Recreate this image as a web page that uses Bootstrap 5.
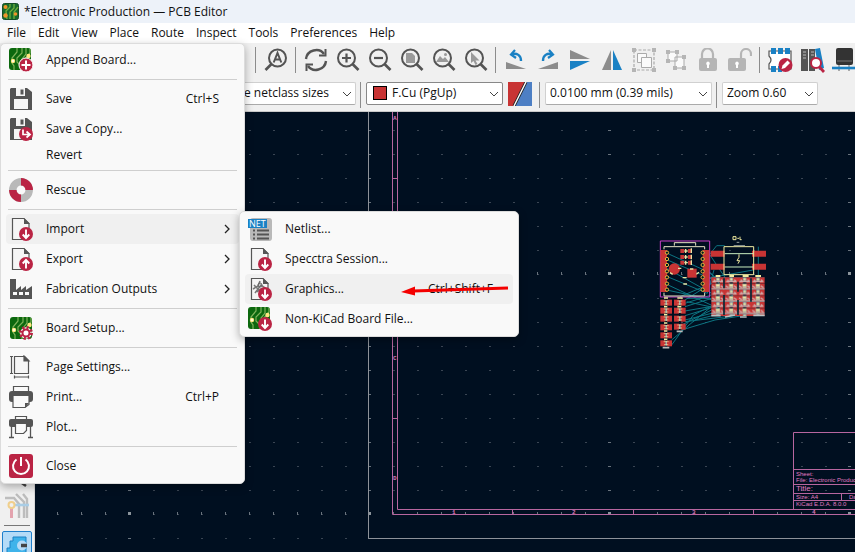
<!DOCTYPE html>
<html lang="en">
<head>
<meta charset="utf-8">
<meta name="viewport" content="width=device-width, initial-scale=1">
<title>*Electronic Production — PCB Editor</title>
<link rel="stylesheet" href="https://cdn.jsdelivr.net/npm/bootstrap@5.3.0/dist/css/bootstrap.min.css">
<style>
body{font-family:"Open Sans","Noto Sans",sans-serif;font-size:12px;line-height:20px;color:#111;background:#f0f0f0}
.titlebar{height:23px;background:#edf2f9;padding:0 2px}
.titlebar h1{font-size:12px;line-height:23px;font-weight:400;margin-left:5px}
.menubar{height:20px;background:#fff}
.menubar .btn{font-size:12px;line-height:20px;padding:0 5px 0 7px;border:0;border-radius:0;color:#111}
.menubar .active{background:#f9f9f9}
.tools{height:37px;padding:0 0 4px 252px}
.tools .btn,.side .btn{width:32px;height:32px;padding:0;border:0;border-radius:2px;display:flex;align-items:center;justify-content:center;flex:none}
.vsep{width:8px;height:26px;flex:none;background:linear-gradient(#8c8c8c,#8c8c8c) 3px 0/1px 100% no-repeat}
.options{height:32px;padding:2px 0 0 120px;border-bottom:1px solid #c9c9c9}
.options .form-select{height:23px;font-size:12px;line-height:20px;padding:0 20px 1px 4px;border:1px solid #d0d0d0;border-bottom-color:#aaa;border-radius:2px;color:#111;flex:none;background-color:#fff;background-image:url("data:image/svg+xml,%3Csvg xmlns='http://www.w3.org/2000/svg' viewBox='0 0 10 10'%3E%3Cpath d='M1 3l4 4 4-4' fill='none' stroke='%23444'/%3E%3C/svg%3E");background-size:10px 10px;background-position:right 3px center}
.sel-track{width:236px;text-align:right;text-align-last:right}
.options .sel-track{padding-right:26px}
.sel-layer{width:137px}
.options .sel-layer .form-select{padding-left:25px;border-color:#888;width:100%}
.chip{left:7px;top:4px;width:14px;height:14px;background:#c83434;border:1px solid #000;pointer-events:none}
.sel-grid{width:167px}.sel-zoom{width:96px}
.gap-sep{padding:0 1px}
.swatch{margin:0 2px 0 4px}
.side{width:35px;background:#f0f0f0;padding-top:368px;border-right:1px solid #d8d8d8;flex:none}
.side .btn.cut{height:10px;align-items:flex-start}
.side hr{width:26px;margin:3px 0 5px;border-color:#777;opacity:1}
.side .chosen{border:1px solid #1f7fcb;background:#b5dbf7;width:30px;height:30px}
.board{background:#000f20;min-width:0}
.pop{background:#f9f9f9;border:1px solid #dcdcdc;border-radius:5px;padding:1px 5px 2px;box-shadow:0 3px 8px rgba(0,0,0,.3)}
.pop-file{left:0;top:43px;width:245px}
.pop-import{left:239px;top:211px;width:280px;padding-top:2px}
.pop .btn{width:100%;height:30px;padding:0 20px 0 3px;border:0;border-radius:4px;display:flex;align-items:center;text-align:left;font-size:12px;line-height:20px;color:#111}
.pop .btn.plain{height:22px;padding-left:40px}
.pop .btn.parent{padding-right:9px}
.pop .btn.hot{background:#f0f0f0}
.pop .btn svg.ic{margin-right:13px;flex:none}
.pop hr{margin:0 2px;height:9px;border:0;opacity:1;background:linear-gradient(#cfcfcf,#cfcfcf) 0 4px/100% 1px no-repeat}
.callout{left:400px;top:280px}
</style>
<script src="https://cdn.jsdelivr.net/npm/bootstrap@5.3.0/dist/js/bootstrap.bundle.min.js"></script>
</head>
<body class="vh-100 overflow-hidden position-relative d-flex flex-column">
<svg width="0" height="0" class="position-absolute" aria-hidden="true">
<defs>
<symbol id="pcb" viewBox="0 0 24 24"><rect x="0" y="0" width="22" height="22" rx="3" fill="#0c680e"/><path d="M8 0v4L3 10v5l2 3v4M13 0v5L8 10v4l4 4v4M17 0v6l-4 5 2 4M21 1v4l-5 6" fill="none" stroke="#7fb35a" stroke-width="1.200"/><circle cx="4" cy="13" r="2.200" fill="#ffe680"/><circle cx="4" cy="13" r="1" fill="#fff"/><circle cx="19.500" cy="8" r="2.200" fill="#ffe680"/></symbol>
<symbol id="page" viewBox="0 0 24 24"><path d="M3.500 1.500h11.500l5 5v16h-16.500z" fill="#f5f5f5" stroke="#555" stroke-width="1.200"/><path d="M15 1l6 6h-6z" fill="#555"/></symbol>
<symbol id="down" viewBox="0 0 24 24"><circle cx="17" cy="17" r="7" fill="#ba2444"/><path d="M17 12.500v8M13.700 17.500l3.300 3.500 3.300-3.500" fill="none" stroke="#fff" stroke-width="1.900"/></symbol>
<symbol id="up" viewBox="0 0 24 24"><circle cx="17" cy="17" r="7" fill="#ba2444"/><path d="M17 21.500v-8M13.700 16.500l3.300-3.500 3.300 3.500" fill="none" stroke="#fff" stroke-width="1.900"/></symbol>
<symbol id="disk" viewBox="0 0 24 24"><path d="M2 1h16l5 4v18H1V2z" fill="#545454"/><path d="M7 1h9v8H7z" fill="#f5f5f5"/><path d="M11.500 2.500h3v5h-3z" fill="#545454"/><path d="M5 12h14v10H5z" fill="#f5f5f5"/></symbol>
<symbol id="lens" viewBox="0 0 24 24"><circle cx="10.500" cy="10" r="8.500" fill="none" stroke="#545454" stroke-width="2"/><path d="M16.500 16l6 6" stroke="#545454" stroke-width="2.600"/></symbol>
<symbol id="chev" viewBox="0 0 6 10"><path d="M1 1l4 4-4 4" fill="none" stroke="#222" stroke-width="1.300"/></symbol>
</defs>
</svg>

<header class="flex-shrink-0">
<div class="titlebar d-flex align-items-center">
<svg width="17" height="17" viewBox="0 0 17 17" aria-hidden="true"><rect x=".5" y=".5" width="16" height="16" rx="2" fill="#176b2c" stroke="#164d27"/><path d="M8 1v3L4 8l1 8M12 1v4L8 9v7M16 4l-4 5v7" fill="none" stroke="#70ae3d" stroke-width="1.300"/><circle cx="3.500" cy="4" r="2" fill="#f0932b"/><circle cx="3.500" cy="12.500" r="2.200" fill="#f0932b"/><circle cx="13.500" cy="11" r="1.800" fill="#f0932b"/></svg>
<h1 class="mb-0">*Electronic Production — PCB Editor</h1>
</div>
<nav class="menubar d-flex" aria-label="Main menu">
<button class="btn active" type="button">File</button><button class="btn" type="button">Edit</button><button class="btn" type="button">View</button><button class="btn" type="button">Place</button><button class="btn" type="button">Route</button><button class="btn" type="button">Inspect</button><button class="btn" type="button">Tools</button><button class="btn" type="button">Preferences</button><button class="btn" type="button">Help</button>
</nav>
<div class="tools d-flex align-items-center overflow-hidden" role="toolbar" aria-label="Main tools">
<span class="vsep"></span>
<button class="btn" type="button" aria-label="Find"><svg width="24" height="24" viewBox="0 0 24 24"><circle cx="13.500" cy="10" r="8.500" fill="none" stroke="#545454" stroke-width="2"/><path d="M7.500 16l-6 6" stroke="#545454" stroke-width="2.600"/><path d="M9.700 14.500l3.800-9.500 3.800 9.500M11 11.500h5" fill="none" stroke="#545454" stroke-width="2"/></svg></button>
<span class="vsep"></span>
<button class="btn" type="button" aria-label="Refresh"><svg width="24" height="24" viewBox="0 0 24 24" fill="none" stroke="#545454" stroke-width="2.400"><path d="M2 11C3 2 15-1 20 6M22 13c-1 9-13 12-18 5"/><path d="M21.500 1v6.500H15M2.500 23v-6.500H9" stroke-width="2"/></svg></button>
<button class="btn" type="button" aria-label="Zoom in"><svg width="24" height="24" viewBox="0 0 24 24"><use href="#lens"/><path d="M6 10h9M10.500 5.500v9" stroke="#545454" stroke-width="2.200"/></svg></button>
<button class="btn" type="button" aria-label="Zoom out"><svg width="24" height="24" viewBox="0 0 24 24"><use href="#lens"/><path d="M6 10h9" stroke="#545454" stroke-width="2.200"/></svg></button>
<button class="btn" type="button" aria-label="Zoom to page"><svg width="24" height="24" viewBox="0 0 24 24"><use href="#lens"/><path d="M6 5h6l3 3v7H6z" fill="#9a9a9a"/></svg></button>
<button class="btn" type="button" aria-label="Zoom to objects"><svg width="24" height="24" viewBox="0 0 24 24"><use href="#lens"/><path d="M4 14l4-6 3 3 2-2 4 5z" fill="#9a9a9a"/><circle cx="13.500" cy="6.500" r="1.500" fill="#9a9a9a"/></svg></button>
<button class="btn" type="button" aria-label="Zoom to selection"><svg width="24" height="24" viewBox="0 0 24 24"><use href="#lens"/><path d="M7 4v11l2.500-2 2 4 2-1-2-3.500h4z" fill="#9a9a9a"/></svg></button>
<span class="vsep"></span>
<button class="btn" type="button" aria-label="Rotate left"><svg width="24" height="24" viewBox="0 0 24 24"><path d="M2 14v7h20z" fill="#8c8c8c"/><path d="M8 6c5-1 9 1 9 7" fill="none" stroke="#1a81c4" stroke-width="2.400"/><path d="M11 2L7 6.500l5 3.500" fill="none" stroke="#1a81c4" stroke-width="2.200"/></svg></button>
<button class="btn" type="button" aria-label="Rotate right"><svg width="24" height="24" viewBox="0 0 24 24"><path d="M22 14v7H2z" fill="#8c8c8c"/><path d="M16 6c-5-1-9 1-9 7" fill="none" stroke="#1a81c4" stroke-width="2.400"/><path d="M13 2l4 4.500-5 3.500" fill="none" stroke="#1a81c4" stroke-width="2.200"/></svg></button>
<button class="btn" type="button" aria-label="Flip vertical"><svg width="24" height="24" viewBox="0 0 24 24"><path d="M2 2l20 9H2z" fill="#8c8c8c"/><path d="M2 13h20L2 22z" fill="#1a81c4"/></svg></button>
<button class="btn" type="button" aria-label="Flip horizontal"><svg width="24" height="24" viewBox="0 0 24 24"><path d="M11 2v20H2z" fill="#8c8c8c"/><path d="M13 2l9 20h-9z" fill="#1a81c4"/></svg></button>
<button class="btn" type="button" aria-label="Group"><svg width="24" height="24" viewBox="0 0 24 24"><path d="M2 2h20v20H2z" fill="none" stroke="#aaa" stroke-width="1.200" stroke-dasharray="3 1.500"/><path d="M0 0h4v4H0zM20 0h4v4h-4zM0 20h4v4H0zM20 20h4v4h-4z" fill="#b5b5b5"/><path d="M5.500 5.500h9v9h-9z" fill="#fafafa" stroke="#aaa"/><path d="M9.500 9.500h10v10h-10z" fill="#fafafa" stroke="#aaa"/></svg></button>
<button class="btn" type="button" aria-label="Ungroup"><svg width="24" height="24" viewBox="0 0 24 24"><path d="M4 4h9v9H4zM11 9h9v11h-9z" fill="#fafafa" stroke="#aaa"/><path d="M2 2h4v4H2zM11 2h4v4h-4zM2 11h4v4H2zM9 18h4v4H9zM18 18h4v4h-4zM18 7h4v4h-4z" fill="#b5b5b5"/></svg></button>
<button class="btn" type="button" aria-label="Lock"><svg width="24" height="24" viewBox="0 0 24 24"><path d="M6 11V6a5.500 5.500 0 0 1 11 0v5" fill="none" stroke="#b5b5b5" stroke-width="2.200"/><rect x="3" y="10" width="18" height="13" rx="2" fill="#b5b5b5"/><path d="M12 13.500a2 2 0 0 1 1 3.600V20h-2v-2.900a2 2 0 0 1 1-3.600z" fill="#fff"/></svg></button>
<button class="btn" type="button" aria-label="Unlock"><svg width="24" height="24" viewBox="0 0 24 24"><path d="M13 11V6a5 5 0 0 1 10 0v2" fill="none" stroke="#b5b5b5" stroke-width="2.200"/><rect x="0" y="10" width="18" height="13" rx="2" fill="#b5b5b5"/><path d="M9 13.500a2 2 0 0 1 1 3.600V20H8v-2.900a2 2 0 0 1 1-3.600z" fill="#fff"/></svg></button>
<span class="vsep"></span>
<button class="btn" type="button" aria-label="Footprint editor"><svg width="26" height="26" viewBox="0 0 26 26"><path d="M2 4h22v18H2v-5q4-4 0-8z" fill="#fff" stroke="#555" stroke-width="1.200"/><path d="M4 1h5v6H4zM11 1h5v6h-5zM18 1h5v6h-5zM4 19h5v6H4zM11 19h4v6h-4z" fill="#1a81c4"/><circle cx="18.500" cy="18" r="7" fill="#ba2444"/><path d="M14.500 22l1-3.500 5-5 2.500 2.500-5 5z" fill="#fff"/></svg></button>
<button class="btn" type="button" aria-label="Footprint libraries"><svg width="26" height="26" viewBox="0 0 26 26"><path d="M2 2h7v22H2zM10 2h6v22h-6z" fill="#545454"/><path d="M4 5h3M4 8h3M4 11h3M12 5h3M12 8h3" stroke="#bbb"/><path d="M16 2l5-1 4 20-5 2z" fill="#1a81c4"/><circle cx="17" cy="16" r="5" fill="#fff" stroke="#ba2444" stroke-width="2"/><path d="M20.500 20l4.500 5" stroke="#ba2444" stroke-width="2.800"/></svg></button>
<button class="btn" type="button" aria-label="Update board"><svg width="26" height="26" viewBox="0 0 26 26"><rect x="5" y="1" width="17" height="17" rx="2" fill="#333"/><path d="M6 14h15" stroke="#777"/><path d="M8 18v6M18 18v6" stroke="#aaa" stroke-width="2"/><path d="M1 21h25" stroke="#1a81c4" stroke-width="2.600"/></svg></button>
</div>
<div class="options d-flex overflow-hidden">
<select class="form-select sel-track" aria-label="Track width"><option>Track: use netclass sizes</option></select>
<span class="gap-sep d-flex"><span class="vsep"></span></span>
<div class="sel-layer position-relative flex-shrink-0"><select class="form-select" aria-label="Layer"><option>F.Cu (PgUp)</option></select><span class="chip position-absolute"></span></div>
<svg class="swatch flex-shrink-0" width="26" height="24" viewBox="0 0 26 24" aria-hidden="true"><path d="M1 0h18L7 24H1z" fill="#c83434"/><path d="M19 0h6v24H8z" fill="#4d7fc4"/><path d="M19 0L7 24" stroke="#222" stroke-width="3"/><path d="M19 0L7 24" stroke="#fff" stroke-width="1.400"/></svg>
<span class="gap-sep d-flex"><span class="vsep"></span></span>
<select class="form-select sel-grid" aria-label="Grid"><option>0.0100 mm (0.39 mils)</option></select>
<span class="gap-sep d-flex"><span class="vsep"></span></span>
<select class="form-select sel-zoom" aria-label="Zoom"><option>Zoom 0.60</option></select>
</div>
</header>

<main class="flex-grow-1 d-flex overflow-hidden">
<div class="side d-flex flex-column align-items-center" role="toolbar" aria-label="Display options">
<button class="btn cut" type="button" aria-label="Curved ratsnest"><svg width="24" height="8" viewBox="0 0 24 8"><path d="M14 1l7 5" stroke="#444" stroke-width="2.600"/></svg></button>
<button class="btn" type="button" aria-label="Ratsnest"><svg width="24" height="26" viewBox="0 0 24 26" fill="none"><path d="M0 5h9l5 6v14M11 1l8 8v16M18 1l4 5v19" stroke="#bdbdbd" stroke-width="2.400"/><path d="M9 12h15" stroke="#a9cde6" stroke-width="2.600"/><path d="M6.500 14v11" stroke="#e3a3ae" stroke-width="3"/><circle cx="6.500" cy="12" r="3" stroke="#f0cf8c" stroke-width="2"/></svg></button>
<hr>
<button class="btn chosen" type="button" aria-label="Filled zones"><svg width="22" height="22" viewBox="0 0 22 22"><path d="M7 2h13v18H1v-7h3V6h3z" fill="#3fb3ea" stroke="#1a81c4"/><circle cx="16" cy="10.500" r="5" fill="#b5dbf7"/><path d="M21 10.500h-6" stroke="#444" stroke-width="3.500"/></svg></button>
</div>
<div class="board flex-grow-1 overflow-hidden">
<svg width="100%" height="100%" class="d-block" role="img" aria-label="Board canvas">
<defs>
<pattern id="minor" width="24" height="24" patternUnits="userSpaceOnUse"><rect x="9" y="10" width="2" height="1" fill="#3a4553"/></pattern>
<pattern id="major" width="240" height="240" patternUnits="userSpaceOnUse"><path d="M128 10.500h3M128 58.500h3M128 82.500h3M128 106.500h3M128 130.500h3M128 154.500h3M128 178.500h3M128 202.500h3M128 226.500h3" stroke="#69737d"/><path d="M9.500 32v3M33.500 32v3M57.500 32v3M81.500 32v3M105.500 32v3M153.500 32v3M177.500 32v3M201.500 32v3M225.500 32v3" stroke="#69737d"/><path d="M128 32h3v3h-3z" fill="#8b949b"/></pattern>
<pattern id="pads" width="40" height="37" patternUnits="userSpaceOnUse" x="184" y="157"><rect width="15" height="17" fill="#c83434"/><rect x="25" width="15" height="17" fill="#c83434"/><rect x="15" width="10" height="14" fill="#9fa6a6"/><rect x="16" y="4" width="8" height="4" fill="#f2eda1"/><rect y="18" width="15" height="16" fill="#c83434"/><rect x="25" y="18" width="15" height="16" fill="#c83434"/><path d="M4 13h32M0 34h40M8 7l5 6M29 7l6 6M3 25l8 5M28 25l8 5" stroke="#d0aaa9" stroke-width="4"/><rect x="13" y="19" width="13" height="14" fill="#bdb8a1"/><path d="M15 24h9" stroke="#f2eda1" stroke-width="4"/></pattern>
<g id="part"><rect width="15" height="18" fill="#c83434"/><rect x="20" width="15" height="18" fill="#c83434"/><rect x="15" y="2" width="5" height="14" fill="#aaa"/><path d="M10 4h15M11 13h13" stroke="#f2eda1" stroke-width="2"/></g>
</defs>
<g transform="translate(-35 -112)">
<rect width="4000" height="4000" fill="url(#minor)"/><rect width="4000" height="4000" fill="url(#major)"/>
<path d="M368.500 112v426.500H4000" fill="none" stroke="#8d9299"/>
<g fill="none" stroke="#b7669f"><path d="M392.500 112v402.500H4000M397.500 112v397.500H4000M392 178.500h5M392 298.500h5M392 418.500h5M512.500 510v4M633.500 510v4M753.500 510v4"/><path d="M4000 432.500H793.500V509M794 469.500h3206M794 484.500h3206M794 493.500h3206M794 500.500h3206M841.500 494v6"/></g>
<g fill="#d878b8" font-family="Liberation Mono, monospace" font-weight="700" font-size="6"><text x="393" y="120">A</text><text x="393" y="240">B</text><text x="393" y="360">C</text><text x="393" y="480">D</text><text x="452" y="514">1</text><text x="572" y="514">2</text><text x="692" y="514">3</text><text x="812" y="514">4</text></g>
<g fill="#e07cc0" font-family="Liberation Sans, sans-serif" font-size="6"><text x="796" y="476">Sheet:</text><text x="796" y="482">File: Electronic Production</text><text x="796" y="491" font-size="8">Title:</text><text x="796" y="499">Size: A4</text><text x="849" y="499">Date:</text><text x="796" y="506">KiCad E.D.A. 8.0.0</text></g>
<g transform="translate(650 225) scale(.3333)">
<g fill="none" stroke="#0d7583" stroke-width="3"><path d="M52 85l132 60 80 105M50 104l140 60M50 130l135 75M52 155l120 50 20-70M50 178l150 70M160 112l40-50h24M160 130l80 60M170 160l140-25M65 360l65-90 120-60M105 225l95-60M105 235l110-35M105 245l145-45M105 258l145-25M105 272l165-50M105 285l100-25M105 290l165-20M95 315l100-30 130-20M95 300l120-60M65 345l70-60 120-30M110 220h150M110 230l140 30M325 65v90M50 195l140 30M180 90l60 90M90 215l95-40M130 290l60-50"/></g>
<path d="M31 48h148v168H31z" fill="none" stroke="#c83fc8" stroke-width="3"/>
<path d="M31 75h20v126H31zM158 75h20v126h-20z" fill="#c83434"/>
<path d="M42 73V65h122v8M42 203v10h122v-10M73 62V53h64v9" fill="none" stroke="#e9e4c4" stroke-width="3"/>
<g fill="#001a24" stroke="#e7b53b" stroke-width="3"><circle cx="51" cy="83" r="5"/><circle cx="51" cy="102" r="5"/><circle cx="51" cy="120" r="5"/><circle cx="51" cy="139" r="5"/><circle cx="51" cy="157" r="5"/><circle cx="51" cy="176" r="5"/><circle cx="51" cy="194" r="5"/><circle cx="158" cy="83" r="5"/><circle cx="158" cy="102" r="5"/><circle cx="158" cy="120" r="5"/><circle cx="158" cy="139" r="5"/><circle cx="158" cy="157" r="5"/><circle cx="158" cy="176" r="5"/><circle cx="158" cy="194" r="5"/></g>
<g fill="#c83434"><path d="M91 72h12v12H91zM114 72h12v12h-12zM91 90h12v12H91zM114 90h12v12h-12zM91 107h12v12H91zM114 107h12v12h-12z"/><circle cx="73" cy="132" r="17"/><path d="M112 131h28v27h-28z"/></g>
<path d="M103 78h10M103 96h10M103 113h10M124 70v14M124 89v14M124 106v14M107 72v12M107 90v12M107 107v12M84 130h10M98 158h12M139 148l8-6M100 177h11M60 143l8 5M120 132h10" stroke="#e9e4a4" stroke-width="4"/>
<path d="M182 77h42v18h-42zM306 77h42v18h-42zM182 116h42v18h-42zM306 116h42v18h-42z" fill="#c83434"/>
<path d="M222 65h89v84h-89z" fill="none" stroke="#f2eda1" stroke-width="3"/>
<path d="M224 86h86M224 126h86" stroke="#c9efc0" stroke-width="3"/>
<path d="M267 88v9l-6 10h8l-5 9" fill="none" stroke="#f2eda1" stroke-width="3"/><path d="M249 35h9v9h-9zM262 40h5M270 35v9h5" fill="none" stroke="#f2eda1" stroke-width="3"/><path d="M251 62h34M260 52h8" stroke="#9da5a0" stroke-width="3"/>
<path d="M184 157h160v116H184z" fill="url(#pads)"/>
<path d="M197 153h14M238 153h14M278 153h18M316 153h17" stroke="#f2eda1" stroke-width="6"/>
<path d="M222 160v30M264 170v30M303 160v70M222 210v60M264 225v45" stroke="#052a38" stroke-width="5"/>
<path d="M184 272h28M225 276l30-6M270 276h20M310 271h34" stroke="#bbc2c2" stroke-width="5"/>
<use href="#part" x="31" y="224"/><use href="#part" x="31" y="248"/><use href="#part" x="31" y="272"/><use href="#part" x="31" y="298"/><use href="#part" x="31" y="322"/><use href="#part" x="31" y="346"/>
<use href="#part" x="72" y="224"/><use href="#part" x="72" y="248"/><use href="#part" x="72" y="272"/><use href="#part" x="72" y="296"/>
<path d="M42 219h12M82 219h16M42 245h10M82 245h12M42 269h10M42 294h10M42 318h10M42 343h10" stroke="#f2eda1" stroke-width="5"/><path d="M38 368h20M80 319h18" stroke="#bbb" stroke-width="5"/>
</g>
</g>
</svg>
</div>
</main>

<div class="pop pop-file position-absolute">
<button class="btn" type="button"><svg class="ic" width="24" height="24" viewBox="0 0 24 24"><use href="#pcb"/><circle cx="17" cy="17" r="7" fill="#ba2444" stroke="#fff"/><path d="M12.500 17h9M17 12.500v9" stroke="#fff" stroke-width="2"/></svg>Append Board...</button>
<hr>
<button class="btn" type="button"><svg class="ic" width="24" height="24"><use href="#disk"/></svg>Save<span class="ms-auto">Ctrl+S</span></button>
<button class="btn" type="button"><svg class="ic" width="24" height="24" viewBox="0 0 24 24"><use href="#disk"/><circle cx="17" cy="17" r="7" fill="#ba2444"/><path d="M14 12.500v5h6M17.500 14.500l3.500 3-3.500 3" fill="none" stroke="#fff" stroke-width="1.700"/></svg>Save a Copy...</button>
<button class="btn plain" type="button">Revert</button>
<hr>
<button class="btn" type="button"><svg class="ic" width="24" height="24" viewBox="0 0 24 24" fill="none" stroke-width="7.500"><circle cx="12" cy="12" r="8.200" stroke="#b9b9b9"/><path d="M12 3.800a8.200 8.200 0 0 1 8.200 8.200M12 20.200a8.200 8.200 0 0 1-8.200-8.200" stroke="#ba2444"/></svg>Rescue</button>
<hr>
<button class="btn parent hot" type="button"><svg class="ic" width="24" height="24"><use href="#page"/><use href="#down"/></svg>Import<svg class="ms-auto" width="6" height="10"><use href="#chev"/></svg></button>
<button class="btn parent" type="button"><svg class="ic" width="24" height="24"><use href="#page"/><use href="#up"/></svg>Export<svg class="ms-auto" width="6" height="10"><use href="#chev"/></svg></button>
<button class="btn parent" type="button"><svg class="ic" width="24" height="24" viewBox="0 0 24 24"><path d="M1 2h6v11l5-4v4l5-4v4l6-4v13H1z" fill="#545454"/><path d="M4 15h4v3H4zM10 15h4v3h-4zM16 15h4v3h-4z" fill="#f9f9f9"/></svg>Fabrication Outputs<svg class="ms-auto" width="6" height="10"><use href="#chev"/></svg></button>
<hr>
<button class="btn" type="button"><svg class="ic" width="24" height="24" viewBox="0 0 24 24"><g transform="translate(1 1)"><use href="#pcb" width="24" height="24"/></g><circle cx="17" cy="17" r="5.800" fill="#fff"/><circle cx="17" cy="17" r="5.500" fill="none" stroke="#ba2444" stroke-width="3" stroke-dasharray="2.200 2.100"/><circle cx="17" cy="17" r="3.500" fill="#fff" stroke="#ba2444" stroke-width="2"/></svg>Board Setup...</button>
<hr>
<button class="btn" type="button"><svg class="ic" width="24" height="24" viewBox="0 0 24 24" fill="none" stroke="#545454" stroke-width="1.200"><path d="M5.500 1.500h10l4 4v13h-14z" fill="#f5f5f5"/><path d="M15 1l5 5h-5z" fill="#545454"/><path d="M1 1.500h3M2.500 1.500v17M1 18.500h3M5.500 20.500v3M5.500 22h14M19.500 20.500v3"/></svg>Page Settings...</button>
<button class="btn" type="button"><svg class="ic" width="24" height="24" viewBox="0 0 24 24"><path d="M4.500 1.500h15v5h-15z" fill="#f9f9f9" stroke="#545454" stroke-width="1.200"/><rect y="6" width="24" height="11" rx="3" fill="#545454"/><path d="M4 10.500h16v9l-4 3H4z" fill="#f9f9f9" stroke="#545454" stroke-width="1.200"/><path d="M20 18l-4 5v-5z" fill="#545454"/></svg>Print...<span class="ms-auto">Ctrl+P</span></button>
<button class="btn" type="button"><svg class="ic" width="24" height="24" viewBox="0 0 24 24"><path d="M6.500 1.500h11v3h-11z" fill="#f9f9f9" stroke="#545454" stroke-width="1.200"/><rect y="4" width="24" height="8" rx="2" fill="#545454"/><path d="M6.500 8.500h11v7l-3 3h-8z" fill="#f9f9f9" stroke="#545454" stroke-width="1.200"/><path d="M2.500 12v10M21.500 12v10M0 22.500h5M19 22.500h5" stroke="#545454" stroke-width="1.300"/></svg>Plot...</button>
<hr>
<button class="btn" type="button"><svg class="ic" width="24" height="24" viewBox="0 0 24 24"><rect width="24" height="24" rx="3" fill="#ba2444"/><path d="M7.500 5.500a8 8 0 1 0 9 0M12 3v9" fill="none" stroke="#fff" stroke-width="2"/></svg>Close</button>
</div>

<div class="pop pop-import position-absolute">
<button class="btn" type="button"><svg class="ic" width="24" height="24" viewBox="0 0 24 24"><rect x="2" y="1" width="22" height="23" rx="3" fill="#b9b9b9"/><path d="M9 13.500h12M9 17.500h12M9 21.500h12" stroke="#545454" stroke-width="1.800"/><path d="M5 13.500h2M5 17.500h2M5 21.500h2" stroke="#545454" stroke-width="1.800"/><rect y="2" width="19" height="9" fill="#1a81c4"/><text x="1" y="10" font-family="Open Sans, sans-serif" font-size="9" fill="#fff">NET</text></svg>Netlist...</button>
<button class="btn" type="button"><svg class="ic" width="24" height="24"><use href="#page"/><use href="#down"/></svg>Specctra Session...</button>
<button class="btn hot" type="button"><svg class="ic" width="24" height="24" viewBox="0 0 24 24"><use href="#page"/><path d="M5 12l5-3 2-5M7 16l6-8 4 3M6 8l5 5M9 15l5-4" fill="none" stroke="#777" stroke-width="1.600"/><circle cx="12" cy="8" r="2" fill="none" stroke="#666"/><use href="#down"/></svg>Graphics...<span class="ms-auto">Ctrl+Shift+F</span></button>
<button class="btn" type="button"><svg class="ic" width="24" height="24"><use href="#pcb"/><use href="#down"/></svg>Non-KiCad Board File...</button>
</div>
<svg class="callout position-absolute" width="110" height="18" viewBox="0 0 110 18" aria-hidden="true"><path d="M13 11L108 8" stroke="#f40000" stroke-width="3"/><path d="M1 12L15 6.500v9z" fill="#f40000"/></svg>
</body>
</html>
